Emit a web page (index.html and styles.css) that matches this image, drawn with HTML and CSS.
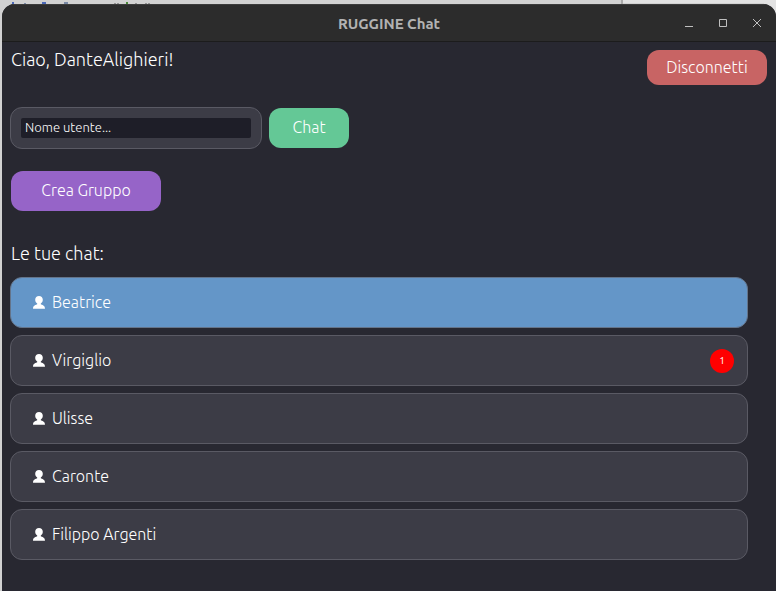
FILE: index.html
```html
<!DOCTYPE html>
<html lang="it">
<head>
<meta charset="utf-8">
<title>RUGGINE Chat</title>
<link rel="stylesheet" href="styles.css">
</head>
<body>
<svg width="0" height="0" class="defs" aria-hidden="true">
  <symbol id="person" viewBox="0 0 12 13">
    <path d="M6 0C3.700 0 2.200 1.500 2.200 3.700C2.200 5.300 3 6.700 4.200 7.500V8.200C3 9 0 8.900 0 12.800H12C12 8.900 9 9 7.800 8.200V7.500C9 6.700 9.800 5.300 9.800 3.700C9.800 1.500 8.300 0 6 0Z" fill="#fff"/>
  </symbol>
</svg>
<svg class="backdrop" width="776" height="20" aria-hidden="true">
  <path d="M623 0H776V3H623ZM764 3H776V20H764Z" fill="#e2e2e2"/>
  <path d="M622 0V5" stroke="#aaa" stroke-width="2"/>
  <path d="M13 2V5M42 3H46" stroke="#4a68b8" stroke-width="2"/>
  <path d="M25 3V5M64 3H68" stroke="#7888a4" stroke-width="2"/>
  <path d="M115 3V5M118 3V5M136 3V5M146 3V5M149 3V5" stroke="#555"/>
  <path d="M127 2V5" stroke="#4a8a38" stroke-width="2"/>
</svg>
<div class="window">
  <header class="titlebar">
    <h1 class="title">RUGGINE Chat</h1>
    <div class="controls">
      <button class="control" aria-label="Riduci a icona"><svg width="10" height="10" viewBox="0 0 10 10"><path d="M1 8.500H9"/></svg></button>
      <button class="control" aria-label="Ingrandisci"><svg width="10" height="10" viewBox="0 0 10 10"><path d="M1.500 1.500H8.500V8.500H1.500Z"/></svg></button>
      <button class="control" aria-label="Chiudi"><svg width="10" height="10" viewBox="0 0 10 10"><path d="M1 1L9 9M9 1L1 9"/></svg></button>
    </div>
  </header>
  <main class="content">
    <div class="top">
      <p class="greeting">Ciao, DanteAlighieri!</p>
      <button class="button disconnect">Disconnetti</button>
    </div>
    <form class="new-chat">
      <div class="field"><input class="username" type="text" placeholder="Nome utente..." aria-label="Nome utente"></div>
      <button class="button start" type="button">Chat</button>
    </form>
    <button class="button group">Crea Gruppo</button>
    <h2 class="heading">Le tue chat:</h2>
    <div class="chats">
      <button class="chat selected"><svg class="person"><use href="#person"/></svg><span class="name">Beatrice</span></button>
      <button class="chat"><svg class="person"><use href="#person"/></svg><span class="name">Virgiglio</span><span class="badge">1</span></button>
      <button class="chat"><svg class="person"><use href="#person"/></svg><span class="name">Ulisse</span></button>
      <button class="chat"><svg class="person"><use href="#person"/></svg><span class="name">Caronte</span></button>
      <button class="chat"><svg class="person"><use href="#person"/></svg><span class="name">Filippo Argenti</span></button>
    </div>
  </main>
</div>
</body>
</html>
```
FILE: styles.css
```css
* { box-sizing: border-box; }
body {
  margin: 0;
  min-height: 100vh;
  padding: 4px 0 0 2px;
  display: flex;
  background: #d2d2d2;
  font-family: Ubuntu, "Noto Sans", sans-serif;
  font-weight: 300;
  color: #fff;
  overflow: hidden;
}
button, input { font: inherit; color: inherit; border: 0; }
button { padding: 0; }
.defs { position: absolute; }
.backdrop {
  position: absolute;
  top: 0;
  left: 0;
}
.window {
  position: relative;
  flex: 1;
  display: flex;
  flex-direction: column;
  background: #282831;
  border-radius: 13px 13px 0 0;
  overflow: hidden;
}
.titlebar {
  display: grid;
  grid-template-columns: 1fr auto 1fr;
  align-items: center;
  height: 38px;
  padding: 0 10px;
  background: #2c2c2c;
  border-top: 1px solid #3c3c3c;
  border-bottom: 1px solid #1c1c1c;
}
.title {
  grid-column: 2;
  margin: 0;
  font-size: 15px;
  font-weight: 700;
  color: #b2b2b2;
}
.controls {
  display: flex;
  justify-content: flex-end;
  gap: 16px;
}
.control {
  width: 18px;
  height: 18px;
  display: grid;
  place-items: center;
  background: none;
}
.control svg { fill: none; stroke: #c0c0c0; }
.content {
  flex: 1;
  padding: 8px 9px;
}
.top {
  display: flex;
  justify-content: space-between;
  align-items: flex-start;
}
.greeting, .heading {
  margin: 0;
  font-size: 18px;
  font-weight: 300;
  line-height: 18px;
}
.button {
  padding-bottom: 2px;
  border-radius: 12px;
  font-size: 16px;
}
.disconnect { width: 120px; height: 35px; background: #c86464; }
.new-chat {
  display: flex;
  align-items: center;
  gap: 7px;
  margin: 22px 0;
}
.field {
  width: 252px;
  margin-left: -1px;
  padding: 10px;
  background: #3c3c46;
  border: 1px solid #5a5a64;
  border-radius: 12px;
}
.username {
  display: block;
  width: 100%;
  height: 20px;
  padding: 0 4px 2px;
  background: #1e1e28;
  border-radius: 2px;
  font-size: 13px;
}
.username::placeholder { color: #fff; opacity: 1; }
.start { width: 80px; height: 40px; background: #64c896; }
.group { width: 150px; height: 40px; background: #9664c8; }
.heading { margin: 33px 0 15px; }
.chats {
  display: flex;
  flex-direction: column;
  gap: 7px;
  margin: 0 19px 0 -1px;
}
.chat {
  display: flex;
  align-items: center;
  height: 51px;
  padding: 0 13px 0 22px;
  background: #3c3c46;
  border: 1px solid #5a5a64;
  border-radius: 12px;
  font-size: 16px;
}
.name { padding-bottom: 2px; }
.selected { background: #6496c8; border-color: #64748a; }
.person { width: 12px; height: 13px; margin-right: 7px; }
.badge {
  width: 24px;
  height: 24px;
  margin-left: auto;
  border-radius: 50%;
  background: #f00;
  font-size: 10px;
  font-weight: 400;
  line-height: 24px;
  text-align: center;
}
```
